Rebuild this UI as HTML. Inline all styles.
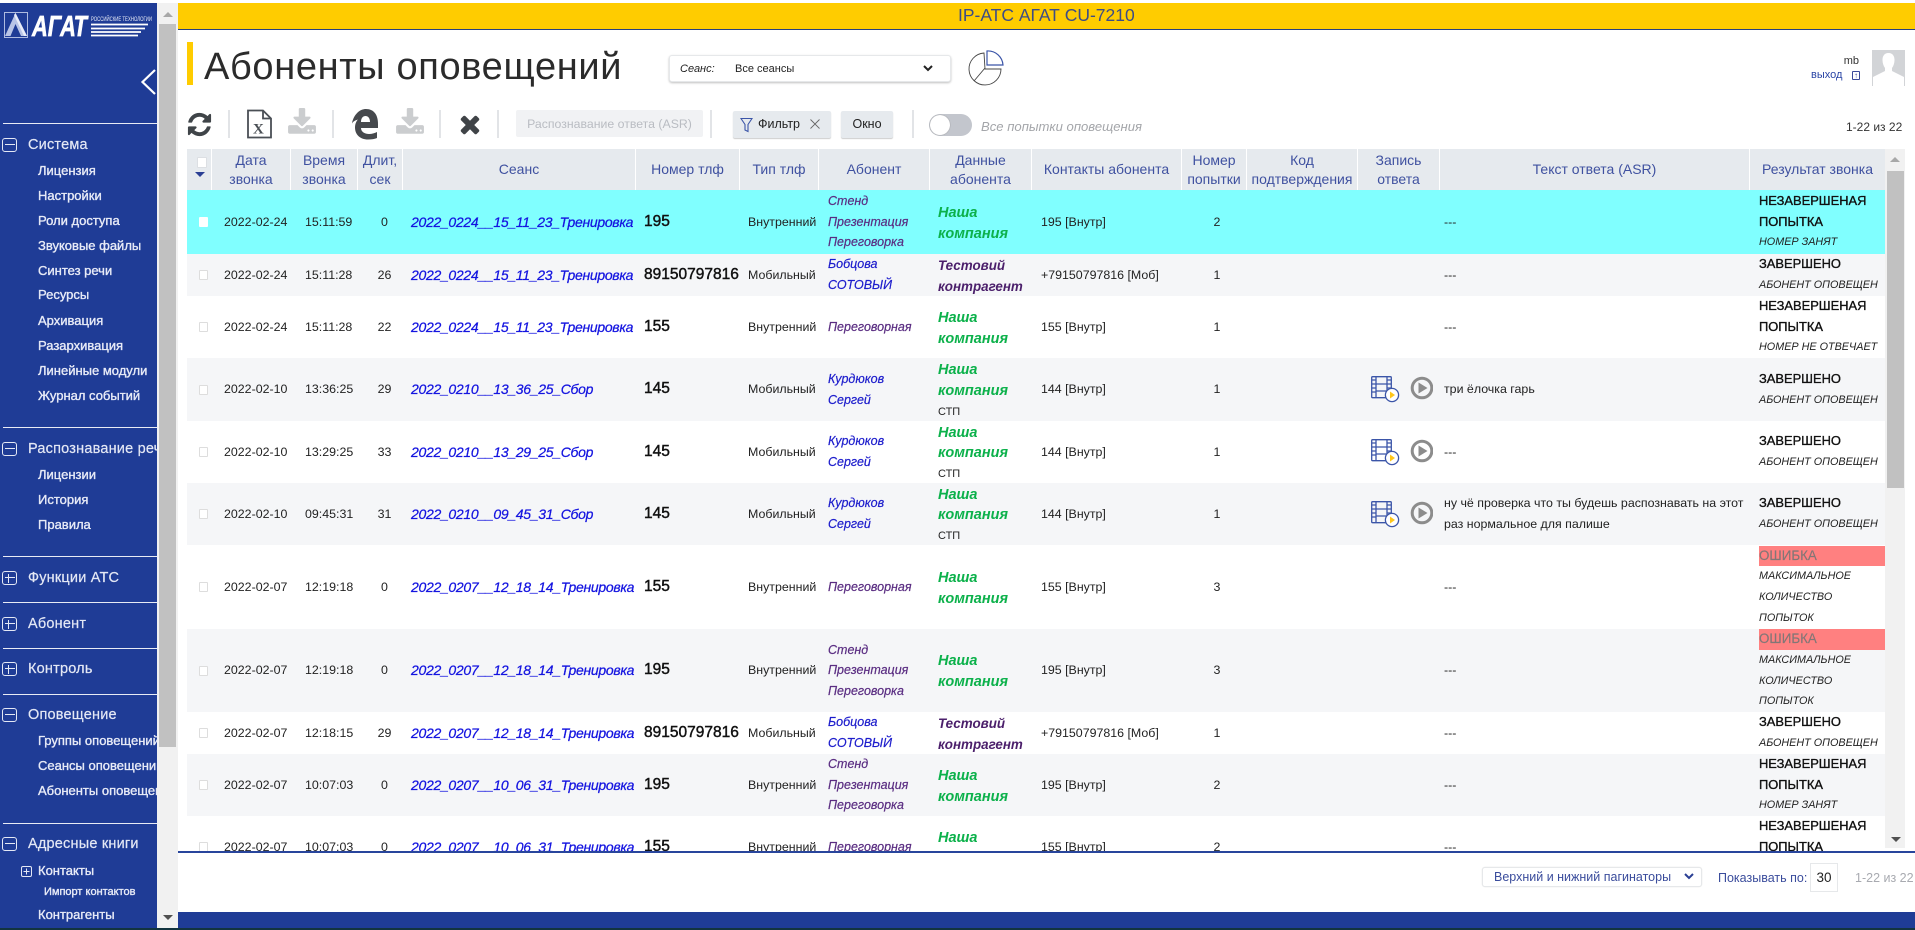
<!DOCTYPE html>
<html lang="ru"><head><meta charset="utf-8"><title>Абоненты оповещений</title>
<style>
*{box-sizing:border-box}
html,body{margin:0;padding:0;width:1915px;height:930px;overflow:hidden;background:#fff;font-family:"Liberation Sans",sans-serif;color:#222}
.a{position:absolute}
#side{left:0;top:3px;width:157px;height:925px;background:#1f3c96;overflow:hidden;color:#fff}
#side .l{position:absolute;left:3px;right:0;height:1px;background:#e8ebf5}
#side .h{position:absolute;left:28px;font-size:14.5px;line-height:18px;color:#e4e8f5;letter-spacing:.2px;white-space:nowrap;-webkit-text-stroke:.2px #e4e8f5}
#side .s{position:absolute;left:38px;font-size:13px;line-height:16px;color:#e8ebf7;white-space:nowrap;-webkit-text-stroke:.35px #e8ebf7}
#side .b{position:absolute;left:2px;width:15px;height:14px;border:1.6px solid #e4e8f5;border-radius:3px}
#side .b:before{content:"";position:absolute;left:1.5px;right:1.5px;top:4.6px;height:1.6px;background:#e4e8f5}
#side .p:after{content:"";position:absolute;top:1.5px;bottom:1.5px;left:4.9px;width:1.6px;background:#e4e8f5}
.sep{position:absolute;top:110px;width:2px;height:28px;background:#e2e4e7}
#hd{left:187px;top:149px;width:1698px;height:41px;background:#e6eaee}
#hd div{position:absolute;top:0;height:41px;border-right:1px solid #fff;text-align:center;font-size:14px;line-height:19px;color:#3f51a0;display:flex;align-items:center;justify-content:center;white-space:nowrap}
#tw{left:187px;top:190px;width:1698px;height:661px;overflow:hidden}
table{border-collapse:collapse;table-layout:fixed;width:1698px}
td{padding:0;vertical-align:middle;font-size:12.4px;line-height:20.6px;white-space:nowrap;overflow:hidden;color:#222}
tr.g td{background:#f5f6f8}
tr.c td{background:#80ffff}
.cb{display:block;width:9px;height:10px;margin-left:12px;background:#fff;border:1px solid #ddd;border-radius:1px}
.c .cb{border-color:#fff}
.d{padding-left:12px}.t{padding-left:14px}.n{text-align:center;padding-left:8px}
.k{padding-left:8px;font-size:14px;letter-spacing:-.3px;font-style:italic;color:#1414e0;-webkit-text-stroke:.25px #1414e0}
.ph{padding-left:9px;font-size:15.5px;color:#111;-webkit-text-stroke:.45px #111}
.ty{padding-left:9px}
.ab{padding-left:10px;font-style:italic;font-size:12.5px;color:#5a2d82;-webkit-text-stroke:.2px #5a2d82}
.ab.b2{color:#1c1ccc;-webkit-text-stroke:.2px #1c1ccc}
.da{padding-left:9px}
.da b{display:block;position:relative;top:1.5px;font-style:italic;font-size:14.5px;color:#0cb14b}
.da b.v{color:#4b1f6b;font-size:13.4px}
.da span{display:block;position:relative;top:2px;font-size:11px;color:#222}
.co{padding-left:10px}
.nu{text-align:center;padding-left:7px}
.re{padding-left:14px}.re svg{display:block}
.tx{padding-left:5px;white-space:normal}
.ru{padding-left:10px;font-size:12.9px;color:#111;-webkit-text-stroke:.35px #111}
.ru i{font-size:10.8px;color:#222;font-style:italic;-webkit-text-stroke:0;display:block}
.ru u{display:block;text-decoration:none;background:#ff8080;color:#827676;height:20.6px;font-size:13.4px;-webkit-text-stroke:.15px #827676}
</style></head><body>
<svg width="0" height="0" style="position:absolute"><defs>
<symbol id="dl" viewBox="0 0 1792 1792"><path fill="#cbcdcf" d="M1344 1344q0-26-19-45t-45-19-45 19-19 45 19 45 45 19 45-19 19-45zm256 0q0-26-19-45t-45-19-45 19-19 45 19 45 45 19 45-19 19-45zm128-224v320q0 40-28 68t-68 28h-1472q-40 0-68-28t-28-68v-320q0-40 28-68t68-28h465l135 136q58 56 136 56t136-56l136-136h464q40 0 68 28t28 68zm-325-569q17 41-14 70l-448 448q-18 19-45 19t-45-19l-448-448q-31-29-14-70 17-39 59-39h256v-448q0-26 19-45t45-19h256q26 0 45 19t19 45v448h256q42 0 59 39z"/></symbol>
<symbol id="fp" viewBox="0 0 62 27">
<g fill="none" stroke="#3b55a8" stroke-width="1.3"><rect x=".7" y=".7" width="19.6" height="21" rx="1"/><path d="M5 1v20.500M16 1v20.500M5 8h11M5 15h11M1 4h4M1 8h4M1 12h4M1 16h4M16 4h4M16 8h4M16 12h4M16 16h4"/></g>
<circle cx="21" cy="19" r="6.600" fill="#fff" stroke="#3b55a8" stroke-width="1.300"/><path d="M19 15.500l5 3.500-5 3.500z" fill="#ffc61a"/>
<circle cx="51" cy="12" r="9.800" fill="none" stroke="#8c8c8c" stroke-width="3"/><path d="M47.500 6.500l9 5.500-9 5.500z" fill="#8c8c8c"/>
</symbol>
</defs></svg>

<div class="a" style="left:0;top:0;width:1915px;height:3px;background:#fff"></div>
<div class="a" style="left:178px;top:3px;width:1737px;height:26px;background:#ffcc00;font-size:17.5px;line-height:25px;color:#3d4c86"><span style="position:absolute;left:780px;white-space:nowrap">IP-АТС АГАТ CU-7210</span></div>
<div class="a" style="left:178px;top:29px;width:1737px;height:1px;background:#28407f"></div>

<div id="side" class="a">
<svg class="a" style="left:0;top:0" width="157" height="40" viewBox="0 0 157 40">
<rect x="4.500" y="9.500" width="23" height="25" fill="none" stroke="#aebbe0"/>
<path d="M5 33L15.500 10 27 33h-6l-5.500-12-5 12z" fill="#b8c4e6"/><path d="M11 33l4.500-8 4 8z" fill="#1f3c96"/><path d="M15.500 10L27 33h-3L14 12z" fill="#e8ecf8"/>
<text x="32" y="33" font-family="Liberation Sans" font-size="29" font-weight="bold" font-style="italic" fill="#fff" stroke="#fff" stroke-width=".7" textLength="55" lengthAdjust="spacingAndGlyphs">АГАТ</text>
<text x="91" y="18" font-family="Liberation Sans" font-size="6" fill="#e8ebf7" textLength="61" lengthAdjust="spacingAndGlyphs">РОССИЙСКИЕ ТЕХНОЛОГИИ</text>
<path d="M91 21.500h57M91 25.500h54M91 29h50M91 32.500h47" stroke="#fff" stroke-width="1.800"/>
</svg>
<svg class="a" style="left:139px;top:65px" width="18" height="28" viewBox="0 0 18 28"><path d="M16 2L3.500 14 16 26" fill="none" stroke="#fff" stroke-width="2.200"/></svg>
<div class="l" style="top:120px"></div>
<div class="b" style="top:135px"></div><div class="h" style="top:133px">Система</div>
<div class="s" style="top:160px">Лицензия</div>
<div class="s" style="top:185px">Настройки</div>
<div class="s" style="top:210px">Роли доступа</div>
<div class="s" style="top:235px">Звуковые файлы</div>
<div class="s" style="top:260px">Синтез речи</div>
<div class="s" style="top:284px">Ресурсы</div>
<div class="s" style="top:310px">Архивация</div>
<div class="s" style="top:335px">Разархивация</div>
<div class="s" style="top:360px">Линейные модули</div>
<div class="s" style="top:385px">Журнал событий</div>
<div class="l" style="top:424px"></div>
<div class="b" style="top:439px"></div><div class="h" style="top:437px">Распознавание речи</div>
<div class="s" style="top:464px">Лицензии</div>
<div class="s" style="top:489px">История</div>
<div class="s" style="top:514px">Правила</div>
<div class="l" style="top:553px"></div>
<div class="b p" style="top:568px"></div><div class="h" style="top:566px">Функции АТС</div>
<div class="l" style="top:599px"></div>
<div class="b p" style="top:614px"></div><div class="h" style="top:612px">Абонент</div>
<div class="l" style="top:645px"></div>
<div class="b p" style="top:659px"></div><div class="h" style="top:657px">Контроль</div>
<div class="l" style="top:691px"></div>
<div class="b" style="top:705px"></div><div class="h" style="top:703px">Оповещение</div>
<div class="s" style="top:730px">Группы оповещений</div>
<div class="s" style="top:755px">Сеансы оповещений</div>
<div class="s" style="top:780px">Абоненты оповещения</div>
<div class="l" style="top:820px"></div>
<div class="b" style="top:834px"></div><div class="h" style="top:832px">Адресные книги</div>
<svg class="a" style="left:21px;top:863px" width="11" height="11" viewBox="0 0 11 11"><rect x=".5" y=".5" width="10" height="10" rx="1.500" fill="none" stroke="#e4e8f5"/><path d="M2.500 5.500h6M5.500 2.500v6" stroke="#e4e8f5"/></svg>
<div class="s" style="top:860px">Контакты</div>
<div class="s" style="left:44px;top:881px;font-size:11px">Импорт контактов</div>
<div class="s" style="top:904px">Контрагенты</div>
</div>

<div class="a" style="left:157px;top:3px;width:21px;height:925px;background:#f1f1f1"></div>
<div class="a" style="left:159px;top:24px;width:17px;height:723px;background:#c1c1c1"></div>
<div class="a" style="left:163px;top:12px;width:0;height:0;border:5px solid transparent;border-top:0;border-bottom:5px solid #a8a8a8"></div>
<div class="a" style="left:163px;top:915px;width:0;height:0;border:5px solid transparent;border-bottom:0;border-top:5px solid #505050"></div>

<div class="a" style="left:187px;top:42px;width:6px;height:43px;background:#ffcc00"></div>
<div class="a" style="left:204px;top:45px;font-size:38px;line-height:44px;color:#2b2b2b;letter-spacing:.65px;white-space:nowrap">Абоненты оповещений</div>

<div class="a" style="left:669px;top:55px;width:282px;height:27px;background:#fff;border:1px solid #e6e8ea;border-radius:3px;box-shadow:0 1px 2px rgba(0,0,0,.25)"></div>
<div class="a" style="left:680px;top:62px;font-size:11px;line-height:15px;font-style:italic;color:#222">Сеанс:</div>
<div class="a" style="left:735px;top:62px;font-size:11px;line-height:15px;color:#222">Все сеансы</div>
<svg class="a" style="left:922px;top:64px" width="12" height="9" viewBox="0 0 12 9"><path d="M2 2l4 4 4-4" fill="none" stroke="#222" stroke-width="2"/></svg>
<svg class="a" style="left:968px;top:50px" width="37" height="36" viewBox="0 0 37 36"><path d="M16 3A16 16 0 1 0 33 19H17zM17 18L6 31" fill="none" stroke="#444" stroke-width=".9"/><path d="M19 1V15H35A15 15 0 0 0 19 1z" fill="none" stroke="#3b55a8" stroke-width="1.200"/></svg>

<div class="a" style="left:1839px;top:54px;width:20px;text-align:right;font-size:11px;line-height:14px;color:#333">mb</div>
<div class="a" style="left:1811px;top:68px;font-size:11px;line-height:14px;color:#2a45a5">выход</div>
<div class="a" style="left:1852px;top:71px;width:8px;height:9px;border:1px solid #3b4a9a;border-radius:1px;font-size:8px;line-height:7px;text-align:center;color:#3b4a9a">↑</div>
<svg class="a" style="left:1872px;top:50px" width="33" height="36" viewBox="0 0 33 36"><rect width="33" height="36" fill="#d2d4d7"/><path d="M16.500 3c-4.500 0-6 3.500-6 7 0 3 1 6 2.500 8v3L1 27v9h31v-9l-12-6v-3c1.500-2 2.500-5 2.500-8 0-3.500-1.500-7-6-7z" fill="#fff"/></svg>

<svg class="a" style="left:186px;top:111px" width="27" height="27" viewBox="0 0 1792 1792"><path fill="#3f4448" d="M1639 1056q0 5-1 7-64 268-268 434.500t-478 166.500q-146 0-282.500-55t-243.500-157l-129 129q-19 19-45 19t-45-19-19-45v-448q0-26 19-45t45-19h448q26 0 45 19t19 45-19 45l-137 137q71 66 161 102t187 36q134 0 250-65t186-179q11-17 53-117 8-23 30-23h192q13 0 22.500 9.500t9.500 22.500zm25-800v448q0 26-19 45t-45 19h-448q-26 0-45-19t-19-45 19-45l138-138q-148-137-349-137-134 0-250 65t-186 179q-11 17-53 117-8 23-30 23h-199q-13 0-22.500-9.500t-9.500-22.500v-7q65-268 270-434.500t480-166.500q146 0 284 55.500t245 156.500l130-129q19-19 45-19t45 19 19 45z"/></svg>
<div class="sep" style="left:228px"></div>
<svg class="a" style="left:246px;top:109px" width="27" height="30" viewBox="0 0 27 30"><path d="M2 1.500h15l8 8v19H2z" fill="#fff" stroke="#4a4f55" stroke-width="1.800"/><path d="M17 1.500v8h8" fill="none" stroke="#4a4f55" stroke-width="1.800"/><text x="7" y="24.500" font-family="Liberation Serif" font-size="15" font-weight="bold" fill="#4a4f55">X</text></svg>
<svg class="a" style="left:287px;top:108px" width="30" height="30"><use href="#dl"/></svg>
<div class="sep" style="left:332px"></div>
<svg class="a" style="left:352px;top:109px" width="26" height="31" viewBox="0 0 26 31"><path fill-rule="evenodd" fill="#46494d" d="M0 14C2 5 8 0 14 0c8 0 12 6 12 15v4H9c0 4 4 6 8 6 3 0 6-1 8-2v6c-2 1-5 1.500-9 1.500-8 0-13-5-13-12 0-3 1-6 3-8-3 1-5 2-6 4zM9 13h9c0-4-2-6-4.500-6S9 9 9 13z"/></svg>
<svg class="a" style="left:395px;top:108px" width="30" height="30"><use href="#dl"/></svg>
<div class="sep" style="left:439px"></div>
<svg class="a" style="left:456px;top:110px" width="28" height="28" viewBox="0 0 1792 1792"><path fill="#404448" d="M1490 1322q0 40-28 68l-136 136q-28 28-68 28t-68-28l-294-294-294 294q-28 28-68 28t-68-28l-136-136q-28-28-28-68t28-68l294-294-294-294q-28-28-28-68t28-68l136-136q28-28 68-28t68 28l294 294 294-294q28-28 68-28t68 28l136 136q28 28 28 68t-28 68l-294 294 294 294q28 28 28 68z"/></svg>
<div class="sep" style="left:497px"></div>
<div class="a" style="left:516px;top:110px;width:187px;height:27px;background:#f1f2f4;border-radius:2px;text-align:center;font-size:12.3px;line-height:29px;color:#b9bcc2">Распознавание ответа (ASR)</div>
<div class="sep" style="left:710px"></div>
<div class="a" style="left:733px;top:111px;width:98px;height:27px;background:#e6eaee;border-radius:2px;box-shadow:0 1px 1px rgba(0,0,0,.2)"></div>
<svg class="a" style="left:740px;top:117px" width="13" height="16" viewBox="0 0 13 16"><path d="M1 1.500h11L8 7.500v7L5 13V7.500z" fill="none" stroke="#3b55a8" stroke-width="1.100"/></svg>
<div class="a" style="left:758px;top:117px;font-size:12.5px;line-height:15px;color:#222">Фильтр</div>
<svg class="a" style="left:809px;top:118px" width="12" height="12" viewBox="0 0 12 12"><path d="M1.500 1.500l9 9M10.500 1.500l-9 9" stroke="#666" stroke-width=".9"/></svg>
<div class="a" style="left:841px;top:111px;width:52px;height:27px;background:#e6eaee;border-radius:2px;box-shadow:0 1px 1px rgba(0,0,0,.2);text-align:center;font-size:12.5px;line-height:27px;color:#222">Окно</div>
<div class="sep" style="left:912px"></div>
<div class="a" style="left:929px;top:114px;width:43px;height:22px;background:#c3c6cd;border-radius:11px"></div>
<div class="a" style="left:930px;top:115px;width:20px;height:20px;background:#fff;border-radius:50%;box-shadow:0 0 1px #777"></div>
<div class="a" style="left:981px;top:119px;font-size:13.1px;line-height:16px;font-style:italic;color:#a4a6aa;white-space:nowrap">Все попытки оповещения</div>
<div class="a" style="left:1846px;top:119px;font-size:12px;line-height:16px;color:#333;white-space:nowrap">1-22 из 22</div>

<div id="hd" class="a">
<div style="left:0;width:25px"></div>
<div style="left:25px;width:79px">Дата<br>звонка</div>
<div style="left:104px;width:67px">Время<br>звонка</div>
<div style="left:171px;width:45px">Длит,<br>сек</div>
<div style="left:216px;width:233px">Сеанс</div>
<div style="left:449px;width:104px">Номер тлф</div>
<div style="left:553px;width:79px">Тип тлф</div>
<div style="left:632px;width:111px">Абонент</div>
<div style="left:743px;width:102px">Данные<br>абонента</div>
<div style="left:845px;width:150px">Контакты абонента</div>
<div style="left:995px;width:65px">Номер<br>попытки</div>
<div style="left:1060px;width:111px">Код<br>подтверждения</div>
<div style="left:1171px;width:82px">Запись<br>ответа</div>
<div style="left:1253px;width:310px">Текст ответа (ASR)</div>
<div style="left:1563px;width:135px;border:0">Результат звонка</div>
</div>
<div class="a" style="left:197px;top:157px;width:10px;height:11px;background:#fff;border:1px solid #dcdfe3;border-radius:1px"></div>
<div class="a" style="left:195px;top:172px;width:0;height:0;border:5px solid transparent;border-bottom:0;border-top:5px solid #2a3f94"></div>

<div id="tw" class="a">
<table>
<colgroup><col style="width:25px"><col style="width:79px"><col style="width:67px"><col style="width:45px"><col style="width:232px"><col style="width:104px"><col style="width:79px"><col style="width:111px"><col style="width:102px"><col style="width:150px"><col style="width:65px"><col style="width:111px"><col style="width:82px"><col style="width:310px"><col style="width:136px"></colgroup>
<tr class="c" style="height:64px"><td><span class="cb"></span></td><td class="d">2022-02-24</td><td class="t">15:11:59</td><td class="n">0</td><td class="k">2022_0224__15_11_23_Тренировка</td><td class="ph">195</td><td class="ty">Внутренний</td><td class="ab">Стенд<br>Презентация<br>Переговорка</td><td class="da"><b>Наша<br>компания</b></td><td class="co">195 [Внутр]</td><td class="nu">2</td><td></td><td></td><td class="tx">---</td><td class="ru">НЕЗАВЕРШЕНАЯ<br>ПОПЫТКА<i>НОМЕР ЗАНЯТ</i></td></tr>
<tr class="g" style="height:42px"><td><span class="cb"></span></td><td class="d">2022-02-24</td><td class="t">15:11:28</td><td class="n">26</td><td class="k">2022_0224__15_11_23_Тренировка</td><td class="ph">89150797816</td><td class="ty">Мобильный</td><td class="ab b2">Бобцова<br>СОТОВЫЙ</td><td class="da"><b class="v">Тестовий<br>контрагент</b></td><td class="co">+79150797816 [Моб]</td><td class="nu">1</td><td></td><td></td><td class="tx">---</td><td class="ru">ЗАВЕРШЕНО<i>АБОНЕНТ ОПОВЕЩЕН</i></td></tr>
<tr style="height:62px"><td><span class="cb"></span></td><td class="d">2022-02-24</td><td class="t">15:11:28</td><td class="n">22</td><td class="k">2022_0224__15_11_23_Тренировка</td><td class="ph">155</td><td class="ty">Внутренний</td><td class="ab">Переговорная</td><td class="da"><b>Наша<br>компания</b></td><td class="co">155 [Внутр]</td><td class="nu">1</td><td></td><td></td><td class="tx">---</td><td class="ru">НЕЗАВЕРШЕНАЯ<br>ПОПЫТКА<i>НОМЕР НЕ ОТВЕЧАЕТ</i></td></tr>
<tr class="g" style="height:63px"><td><span class="cb"></span></td><td class="d">2022-02-10</td><td class="t">13:36:25</td><td class="n">29</td><td class="k">2022_0210__13_36_25_Сбор</td><td class="ph">145</td><td class="ty">Мобильный</td><td class="ab b2">Курдюков<br>Сергей</td><td class="da"><b>Наша<br>компания</b><span>СТП</span></td><td class="co">144 [Внутр]</td><td class="nu">1</td><td></td><td class="re"><svg width="62" height="27"><use href="#fp"/></svg></td><td class="tx">три ёлочка гарь</td><td class="ru">ЗАВЕРШЕНО<i>АБОНЕНТ ОПОВЕЩЕН</i></td></tr>
<tr style="height:62px"><td><span class="cb"></span></td><td class="d">2022-02-10</td><td class="t">13:29:25</td><td class="n">33</td><td class="k">2022_0210__13_29_25_Сбор</td><td class="ph">145</td><td class="ty">Мобильный</td><td class="ab b2">Курдюков<br>Сергей</td><td class="da"><b>Наша<br>компания</b><span>СТП</span></td><td class="co">144 [Внутр]</td><td class="nu">1</td><td></td><td class="re"><svg width="62" height="27"><use href="#fp"/></svg></td><td class="tx">---</td><td class="ru">ЗАВЕРШЕНО<i>АБОНЕНТ ОПОВЕЩЕН</i></td></tr>
<tr class="g" style="height:62px"><td><span class="cb"></span></td><td class="d">2022-02-10</td><td class="t">09:45:31</td><td class="n">31</td><td class="k">2022_0210__09_45_31_Сбор</td><td class="ph">145</td><td class="ty">Мобильный</td><td class="ab b2">Курдюков<br>Сергей</td><td class="da"><b>Наша<br>компания</b><span>СТП</span></td><td class="co">144 [Внутр]</td><td class="nu">1</td><td></td><td class="re"><svg width="62" height="27"><use href="#fp"/></svg></td><td class="tx">ну чё проверка что ты будешь распознавать на этот раз нормальное для палише</td><td class="ru">ЗАВЕРШЕНО<i>АБОНЕНТ ОПОВЕЩЕН</i></td></tr>
<tr style="height:84px"><td><span class="cb"></span></td><td class="d">2022-02-07</td><td class="t">12:19:18</td><td class="n">0</td><td class="k">2022_0207__12_18_14_Тренировка</td><td class="ph">155</td><td class="ty">Внутренний</td><td class="ab">Переговорная</td><td class="da"><b>Наша<br>компания</b></td><td class="co">155 [Внутр]</td><td class="nu">3</td><td></td><td></td><td class="tx">---</td><td class="ru"><u>ОШИБКА</u><i>МАКСИМАЛЬНОЕ<br>КОЛИЧЕСТВО<br>ПОПЫТОК</i></td></tr>
<tr class="g" style="height:83px"><td><span class="cb"></span></td><td class="d">2022-02-07</td><td class="t">12:19:18</td><td class="n">0</td><td class="k">2022_0207__12_18_14_Тренировка</td><td class="ph">195</td><td class="ty">Внутренний</td><td class="ab">Стенд<br>Презентация<br>Переговорка</td><td class="da"><b>Наша<br>компания</b></td><td class="co">195 [Внутр]</td><td class="nu">3</td><td></td><td></td><td class="tx">---</td><td class="ru"><u>ОШИБКА</u><i>МАКСИМАЛЬНОЕ<br>КОЛИЧЕСТВО<br>ПОПЫТОК</i></td></tr>
<tr style="height:42px"><td><span class="cb"></span></td><td class="d">2022-02-07</td><td class="t">12:18:15</td><td class="n">29</td><td class="k">2022_0207__12_18_14_Тренировка</td><td class="ph">89150797816</td><td class="ty">Мобильный</td><td class="ab b2">Бобцова<br>СОТОВЫЙ</td><td class="da"><b class="v">Тестовий<br>контрагент</b></td><td class="co">+79150797816 [Моб]</td><td class="nu">1</td><td></td><td></td><td class="tx">---</td><td class="ru">ЗАВЕРШЕНО<i>АБОНЕНТ ОПОВЕЩЕН</i></td></tr>
<tr class="g" style="height:62px"><td><span class="cb"></span></td><td class="d">2022-02-07</td><td class="t">10:07:03</td><td class="n">0</td><td class="k">2022_0207__10_06_31_Тренировка</td><td class="ph">195</td><td class="ty">Внутренний</td><td class="ab">Стенд<br>Презентация<br>Переговорка</td><td class="da"><b>Наша<br>компания</b></td><td class="co">195 [Внутр]</td><td class="nu">2</td><td></td><td></td><td class="tx">---</td><td class="ru">НЕЗАВЕРШЕНАЯ<br>ПОПЫТКА<i>НОМЕР ЗАНЯТ</i></td></tr>
<tr style="height:62px"><td><span class="cb"></span></td><td class="d">2022-02-07</td><td class="t">10:07:03</td><td class="n">0</td><td class="k">2022_0207__10_06_31_Тренировка</td><td class="ph">155</td><td class="ty">Внутренний</td><td class="ab">Переговорная</td><td class="da"><b>Наша<br>компания</b></td><td class="co">155 [Внутр]</td><td class="nu">2</td><td></td><td></td><td class="tx">---</td><td class="ru">НЕЗАВЕРШЕНАЯ<br>ПОПЫТКА<i>НОМЕР НЕ ОТВЕЧАЕТ</i></td></tr>
</table>
</div>

<div class="a" style="left:1885px;top:149px;width:20px;height:699px;background:#f1f1f1"></div>
<div class="a" style="left:1887px;top:171px;width:17px;height:317px;background:#c1c1c1"></div>
<div class="a" style="left:1890px;top:157px;width:0;height:0;border:5px solid transparent;border-top:0;border-bottom:5px solid #a8a8a8"></div>
<div class="a" style="left:1891px;top:837px;width:0;height:0;border:5px solid transparent;border-bottom:0;border-top:5px solid #505050"></div>

<div class="a" style="left:178px;top:851px;width:1737px;height:2px;background:#28459c"></div>

<div class="a" style="left:1482px;top:867px;width:220px;height:20px;background:#fff;border:1px solid #e6e8ea;border-radius:3px;box-shadow:0 0 1px rgba(0,0,0,.15)"></div>
<div class="a" style="left:1494px;top:869px;font-size:12.5px;line-height:16px;color:#3a4c9c;white-space:nowrap">Верхний и нижний пагинаторы</div>
<svg class="a" style="left:1683px;top:872px" width="12" height="9" viewBox="0 0 12 9"><path d="M2 2l4 4 4-4" fill="none" stroke="#2a3f94" stroke-width="2"/></svg>
<div class="a" style="left:1718px;top:870px;font-size:12.5px;line-height:16px;color:#3a4c9c;white-space:nowrap">Показывать по:</div>
<div class="a" style="left:1810px;top:863px;width:28px;height:29px;border:1px solid #e6e8ea;text-align:center;font-size:13.5px;line-height:27px;color:#222">30</div>
<div class="a" style="left:1855px;top:870px;font-size:12.5px;line-height:16px;color:#a8aab0;white-space:nowrap">1-22 из 22</div>

<div class="a" style="left:178px;top:912px;width:1737px;height:16px;background:#1f3c96"></div>
<div class="a" style="left:0;top:928px;width:1915px;height:2px;background:#12343f"></div>
</body></html>
